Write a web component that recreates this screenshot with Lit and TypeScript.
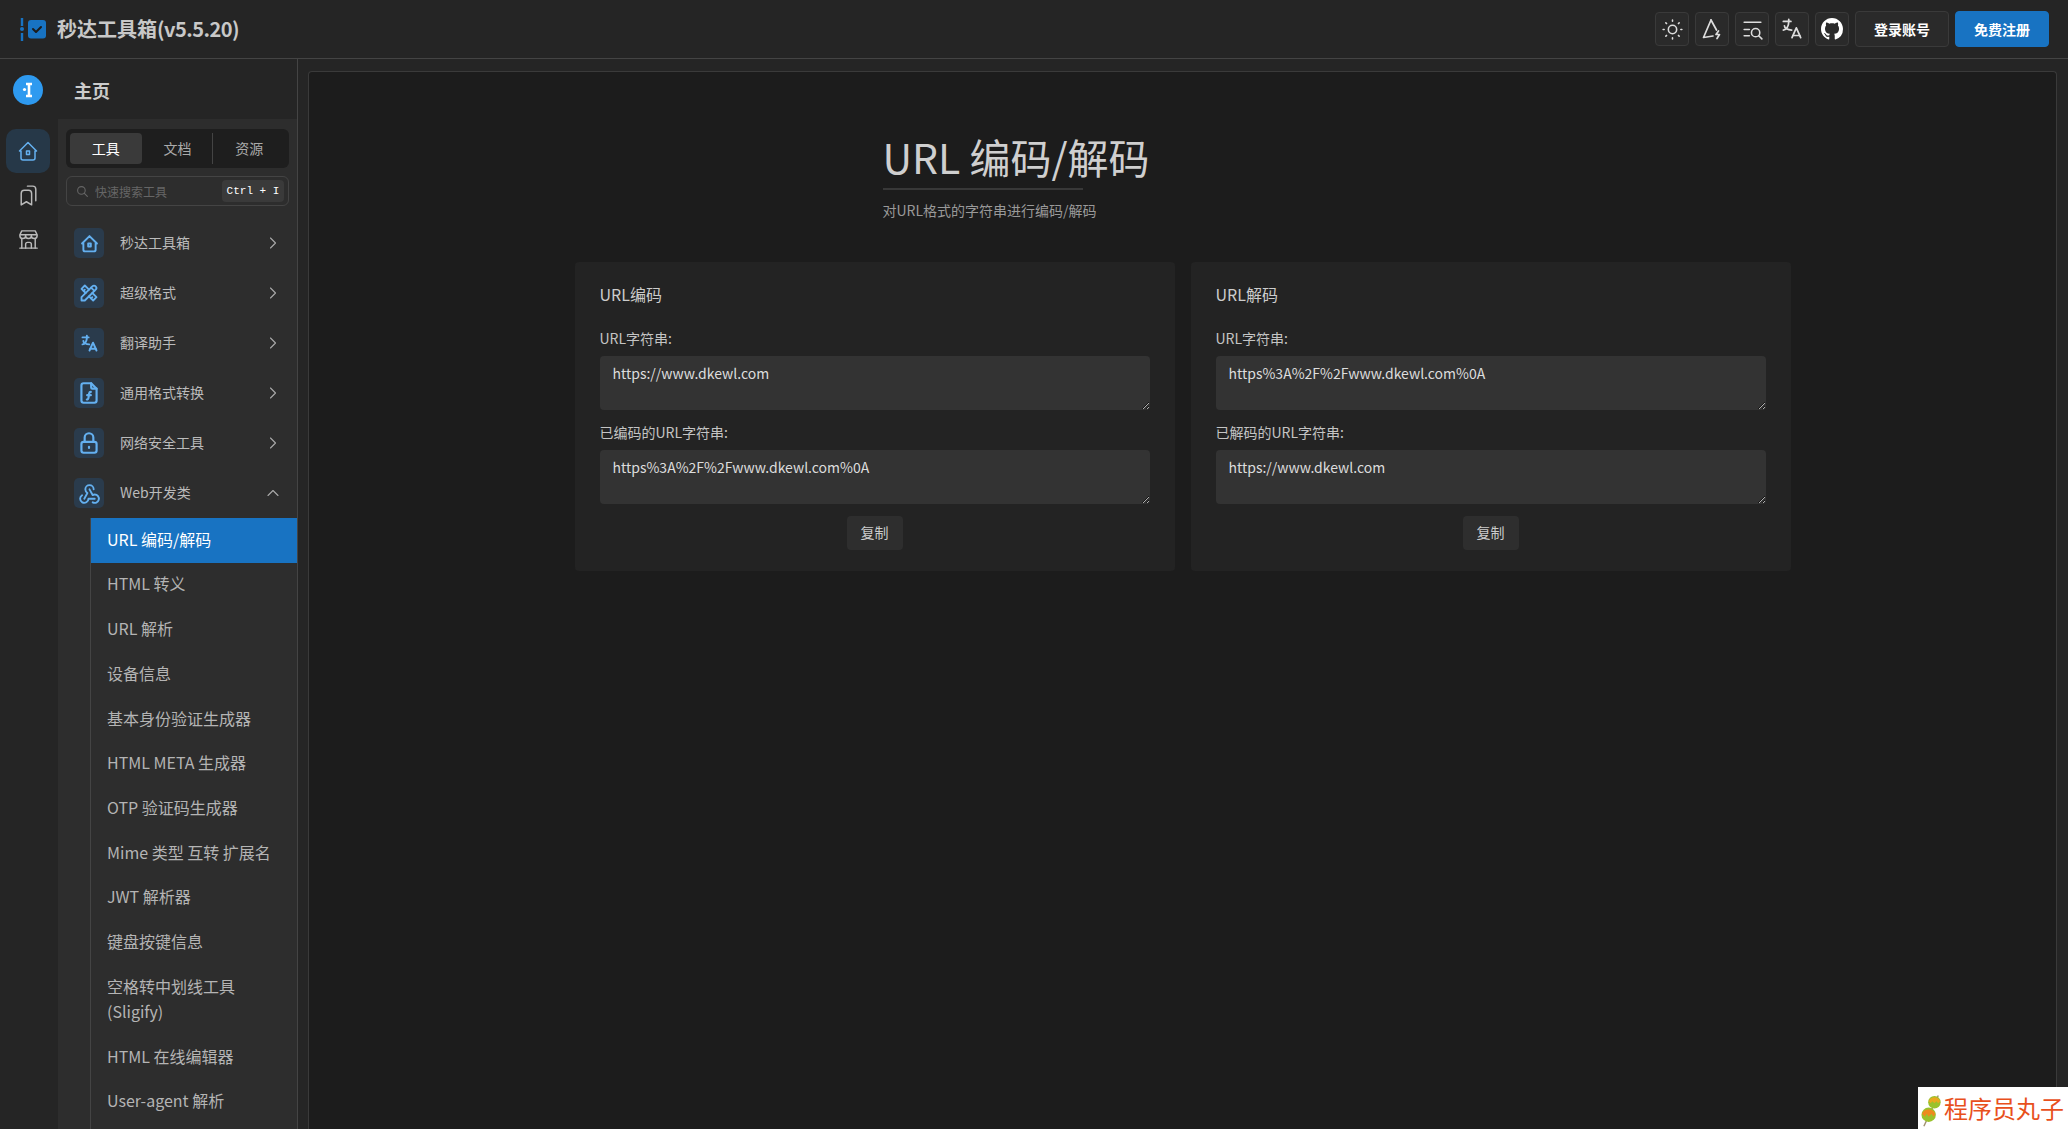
import { LitElement, html, css, svg } from "lit";
import { customElement } from "lit/decorators.js";

const P: Record<string, string[]> = {
  home: ["M3.5 12 12 3.5l8.5 8.5H19v7a2 2 0 0 1-2 2H7a2 2 0 0 1-2-2v-7H3.5z", "M10.5 12h3v3.5h-3z"],
  marks: ["M15 10v11l-5-3-5 3V10a3 3 0 0 1 3-3h4a3 3 0 0 1 3 3z", "M11 3h5a3 3 0 0 1 3 3v11"],
  store: ["M3 21h18", "M3 7v1a3 3 0 0 0 6 0V7m0 1a3 3 0 0 0 6 0V7m0 1a3 3 0 0 0 6 0V7H3l2-4h14l2 4", "M5 21V10.85", "M19 21V10.85", "M9 21v-4a2 2 0 0 1 2-2h2a2 2 0 0 1 2 2v4"],
  tools: ["M3 21h4L20 8a1.5 1.5 0 0 0-4-4L3 17v4", "M14.5 5.5l4 4", "M12 8 7 3 3 7l5 5", "M7 8 5.5 9.5", "M16 12l5 5-4 4-5-5", "M16 17l-1.5 1.5"],
  lang: ["M4 5h7", "M9 3v2c0 4.418-2.239 8-5 8", "M5 9c0 2.144 2.952 3.908 6.7 4", "M12 20l4-9 4 9", "M19.1 18h-6.2"],
  file: ["M14 3v4a1 1 0 0 0 1 1h4", "M17 21H7a2 2 0 0 1-2-2V5a2 2 0 0 1 2-2h7l5 5v11a2 2 0 0 1-2 2z", "M10 18c1 0 1.4-.6 1.6-2l.5-3.5c.2-1 .6-1.5 1.6-1.5", "M10.3 14h3.4"],
  lock: ["M7 11h10a2 2 0 0 1 2 2v6a2 2 0 0 1-2 2H7a2 2 0 0 1-2-2v-6a2 2 0 0 1 2-2z", "M12 15.5v1", "M8 11V7a4 4 0 1 1 8 0v4"],
  hook: ["M4.876 13.61a4 4 0 1 0 6.124 3.39h6", "M15.066 20.502a4 4 0 1 0 1.934-7.502c-.706 0-1.424.179-2 .5l-3-5.5", "M16 8a4 4 0 1 0-8 0c0 1.506.77 2.818 2 3.5l-3 5.5"],
  sun: ["M8 12a4 4 0 1 0 8 0 4 4 0 1 0-8 0", "M3 12h1m8-9v1m8 8h1m-9 8v1M5.6 5.6l.7.7m12.1-.7-.7.7m0 11.4.7.7m-12.1-.7-.7.7"],
  tri: ["M11 3 3.5 20.5l9.5-1.5", "M11 3l5.5 10", "M18.5 14l-2.5 3.5h3.5L17 21.5"],
  find: ["M4 5h16", "M4 12h5", "M4 18h5", "M11 15a4 4 0 1 0 8 0 4 4 0 1 0-8 0", "M18 18l3 3"],
  chevR: ["M9 6l6 6-6 6"],
  chevU: ["M6 15l6-6 6 6"],
  search: ["M3 10a7 7 0 1 0 14 0 7 7 0 1 0-14 0", "M21 21l-6-6"],
};

const ic = (name: string, size: number, sw = 2) => html`<svg width=${size} height=${size} viewBox="0 0 24 24" fill="none" stroke="currentColor" stroke-width=${sw} stroke-linecap="round" stroke-linejoin="round">${P[name].map((d) => svg`<path d=${d}></path>`)}</svg>`;

const menu: [string, number, number, string][] = [
  ["home", 21, 2.2, "秒达工具箱"],
  ["tools", 20, 2.2, "超级格式"],
  ["lang", 21, 2.2, "翻译助手"],
  ["file", 26, 2, "通用格式转换"],
  ["lock", 26, 2, "网络安全工具"],
];
const subs = ["HTML 转义", "URL 解析", "设备信息", "基本身份验证生成器", "HTML META 生成器", "OTP 验证码生成器", "Mime 类型 互转 扩展名", "JWT 解析器", "键盘按键信息", "空格转中划线工具 (Sligify)", "HTML 在线编辑器", "User-agent 解析"];
const cards = [
  ["URL编码", "URL字符串:", "https://www.dkewl.com", "已编码的URL字符串:", "https%3A%2F%2Fwww.dkewl.com%0A"],
  ["URL解码", "URL字符串:", "https%3A%2F%2Fwww.dkewl.com%0A", "已解码的URL字符串:", "https://www.dkewl.com"],
];

@customElement("app-root")
export class AppRoot extends LitElement {
  static styles = css`
    :host { display: block; height: 100vh; overflow: hidden; background: #252525; color: #ccc; font-family: "Noto Sans CJK SC", "Noto Sans", sans-serif; font-size: 14px; position: relative; }
    * { box-sizing: border-box; }
    .head { height: 59px; border-bottom: 1px solid #444; display: flex; align-items: center; padding: 0 19px 0 20px; }
    .logo { display: block; margin-right: 11px; }
    .brand { font-size: 20px; font-weight: 700; color: #c8c8c8; flex: 1; line-height: 1; }
    .ver { letter-spacing: -0.55px; }
    .tools { display: flex; gap: 6px; align-items: center; }
    .ib { width: 34px; height: 34px; background: #2a2a2a; border: 1px solid #3a3a3a; border-radius: 4px; display: flex; align-items: center; justify-content: center; color: #ddd; }
    .btn { width: 94px; height: 36px; background: #2a2a2a; border: 1px solid #3a3a3a; border-radius: 4px; color: #fff; font-weight: 700; display: flex; align-items: center; justify-content: center; font-size: 14px; padding-bottom: 1px; }
    .btn.pri { background: #1873c2; border-color: #1873c2; }
    .layout { display: flex; height: calc(100vh - 59px); }
    aside { width: 298px; flex: none; border-right: 1px solid #444; display: flex; flex-direction: column; overflow: hidden; }
    .top { height: 60px; flex: none; display: flex; align-items: center; padding: 2px 0 0 13px; gap: 31px; }
    .top b { font-size: 18px; color: #ccc; font-weight: 700; }
    .body { flex: 1; display: flex; min-height: 0; }
    .rail { width: 58px; flex: none; display: flex; flex-direction: column; align-items: center; padding: 10px 2px 0 0; }
    .rb { width: 44px; height: 44px; display: flex; align-items: center; justify-content: center; border-radius: 10px; color: #bbb; }
    .rb.on { background: #263848; color: #64b0f0; }
    .panel { flex: 1; background: #2d2d2d; padding-top: 10px; overflow: hidden; }
    .seg { margin: 0 8px; height: 39px; background: #1e1e1e; border-radius: 6px; display: flex; align-items: center; padding: 0 4px; }
    .seg span { flex: 1; height: 31px; display: flex; align-items: center; justify-content: center; color: #aaa; position: relative; padding-bottom: 2px; }
    .seg span.on { background: #3a3a3a; border-radius: 4px; color: #fff; }
    .seg span.sep::after { content: ""; position: absolute; right: 0; top: 0; bottom: 0; width: 1px; background: #444; }
    .find { margin: 8px 8px 0; height: 30px; border: 1px solid #444; border-radius: 6px; display: flex; align-items: center; padding: 0 4px 0 9px; color: #666; font-size: 12px; gap: 6px; }
    .find i { font-style: normal; flex: 1; }
    .find kbd { height: 22px; width: 62px; background: #3a3a3a; border-radius: 4px; color: #fff; font: 11px "Liberation Mono", "DejaVu Sans Mono", monospace; display: flex; align-items: center; justify-content: center; }
    .row { height: 50px; display: flex; align-items: center; padding: 0 14px 0 16px; gap: 16px; color: #bbb; }
    .rows { padding-top: 12px; }
    .box { width: 30px; height: 30px; border-radius: 5px; background: #2a3b4c; color: #64b0f0; display: flex; align-items: center; justify-content: center; flex: none; }
    .row .t { flex: 1; padding-bottom: 2px; }
    .row .c { color: #aaa; display: flex; }
    .subs { margin-left: 32px; border-left: 1px solid #444; padding-bottom: 40px; }
    .sub { font-size: 16px; line-height: 1.56; padding: 8.6px 16px 11.2px; color: #b4b4b4; }
    .sub.on { background: #1873c2; color: #fff; }
    main { flex: 1; min-width: 0; padding: 12px 11px 0 10px; }
    .sheet { height: 100%; background: #1c1c1c; border: 1px solid #3a3a3a; border-bottom: 0; border-radius: 4px 4px 0 0; padding-top: 54px; }
    .hd { width: 600px; margin: 0 auto; }
    h1 { margin: 0; font-size: 41px; font-weight: 400; color: #cfcfcf; line-height: 60px; white-space: nowrap; }
    .rule { width: 200px; height: 2px; background: #383838; margin-top: 2px; }
    .hd p { margin: 10px 0 0; color: #999; line-height: 20px; }
    .cards { width: 1216px; margin: 42px auto 0; display: grid; grid-template-columns: 1fr 1fr; gap: 16px; }
    .card { background: #232323; border-radius: 4px; padding: 19px 25px 21px; display: flex; flex-direction: column; }
    h2 { margin: 0 0 21px; font-size: 16px; font-weight: 400; line-height: 26px; color: #ccc; }
    label { display: block; line-height: 20px; color: #c4c4c4; margin-bottom: 8px; }
    textarea { display: block; width: 100%; height: 54px; background: #333; border: 0; border-radius: 4px; padding: 7px 13px; color: #ddd; font: inherit; line-height: 20px; margin-bottom: 12px; outline: none; }
    .copy { align-self: center; width: 56px; height: 34px; background: #2e2e2e; border-radius: 4px; display: flex; align-items: center; justify-content: center; color: #ccc; padding-bottom: 2px; }
    .mark { position: absolute; right: 0; bottom: 0; width: 150px; height: 42px; background: #fff; color: #e8501c; font-size: 24px; line-height: 42px; display: flex; align-items: center; padding-left: 3px; white-space: nowrap; overflow: hidden; }
  `;

  render() {
    return html`
      <header class="head">
        <svg class="logo" width="26" height="26" viewBox="0 0 26 26"><path d="M2 2v8M2 17v8" stroke="#1873c2" stroke-width="2.4" fill="none"></path><circle cx="2" cy="13" r="2" fill="#1873c2"></circle><rect x="8" y="4" width="18" height="18.5" rx="3" fill="#1873c2"></rect><path d="M13 13l3 3 5-5" stroke="#1c1c1c" stroke-width="2" fill="none" stroke-linecap="round" stroke-linejoin="round"></path></svg>
        <div class="brand">秒达工具箱<span class="ver">(v5.5.20)</span></div>
        <div class="tools">
          <div class="ib">${ic("sun", 25, 1.5)}</div>
          <div class="ib">${ic("tri", 24, 1.7)}</div>
          <div class="ib">${ic("find", 25, 1.5)}</div>
          <div class="ib">${ic("lang", 26, 1.6)}</div>
          <div class="ib"><svg width="22" height="22" viewBox="0 0 16 16" fill="#fff"><path d="M8 0C3.58 0 0 3.58 0 8c0 3.54 2.29 6.53 5.47 7.59.4.07.55-.17.55-.38 0-.19-.01-.82-.01-1.49-2.01.37-2.53-.49-2.69-.94-.09-.23-.48-.94-.82-1.13-.28-.15-.68-.52-.01-.53.63-.01 1.08.58 1.23.82.72 1.21 1.87.87 2.33.66.07-.52.28-.87.51-1.07-1.78-.2-3.64-.89-3.64-3.95 0-.87.31-1.59.82-2.15-.08-.2-.36-1.02.08-2.12 0 0 .67-.21 2.2.82.64-.18 1.32-.27 2-.27.68 0 1.36.09 2 .27 1.53-1.04 2.2-.82 2.2-.82.44 1.1.16 1.92.08 2.12.51.56.82 1.27.82 2.15 0 3.07-1.87 3.75-3.65 3.95.29.25.54.73.54 1.48 0 1.07-.01 1.93-.01 2.2 0 .21.15.46.55.38A8.013 8.013 0 0016 8c0-4.42-3.58-8-8-8z"></path></svg></div>
          <div class="btn">登录账号</div>
          <div class="btn pri">免费注册</div>
        </div>
      </header>
      <div class="layout">
        <aside>
          <div class="top">
            <svg width="30" height="30" viewBox="0 0 30 30"><circle cx="15" cy="15" r="15" fill="#2e9af0"></circle><path d="M13 9h6M13 21h6M16 9v12" stroke="#fff" stroke-width="2.6" fill="none"></path><circle cx="11.5" cy="14.5" r="1.6" fill="#fff"></circle></svg>
            <b>主页</b>
          </div>
          <div class="body">
            <div class="rail">
              <div class="rb on">${ic("home", 24, 1.5)}</div>
              <div class="rb">${ic("marks", 25, 1.4)}</div>
              <div class="rb">${ic("store", 23, 1.5)}</div>
            </div>
            <div class="panel">
              <div class="seg"><span class="on">工具</span><span class="sep">文档</span><span>资源</span></div>
              <div class="find">${ic("search", 13, 2)}<i>快速搜索工具</i><kbd>Ctrl + I</kbd></div>
              <div class="rows">
                ${menu.map((m) => html`<div class="row"><div class="box">${ic(m[0], m[1], m[2])}</div><div class="t">${m[3]}</div><div class="c">${ic("chevR", 20, 1.3)}</div></div>`)}
                <div class="row"><div class="box">${ic("hook", 25, 1.8)}</div><div class="t">Web开发类</div><div class="c">${ic("chevU", 20, 1.3)}</div></div>
              </div>
              <div class="subs">
                <div class="sub on">URL 编码/解码</div>
                ${subs.map((s) => html`<div class="sub">${s}</div>`)}
              </div>
            </div>
          </div>
        </aside>
        <main>
          <div class="sheet">
            <div class="hd">
              <h1>URL 编码/解码</h1>
              <div class="rule"></div>
              <p>对URL格式的字符串进行编码/解码</p>
            </div>
            <div class="cards">
              ${cards.map((c) => html`<section class="card">
                <h2>${c[0]}</h2>
                <label>${c[1]}</label>
                <textarea .value=${c[2]}></textarea>
                <label>${c[3]}</label>
                <textarea .value=${c[4]}></textarea>
                <div class="copy">复制</div>
              </section>`)}
            </div>
          </div>
        </main>
      </div>
      <div class="mark">
        <svg width="23" height="38" viewBox="0 0 24 38"><path d="M3 38 18 6" stroke="#a09070" stroke-width="1.5"></path><circle cx="14" cy="13" r="6.5" fill="#9ac22c"></circle><path d="M8 12c2-5 10-6 12 0l-2 2-2-2-2 2-2-2-2 2z" fill="#e9a820"></path><circle cx="8" cy="26" r="7.5" fill="#9ac22c"></circle><path d="M1 25c2-6 12-6 14 0l-2 3-2-3-3 3-2-3-2 3z" fill="#ee8a1e"></path></svg>
        <span>程序员丸子</span>
      </div>
    `;
  }
}
